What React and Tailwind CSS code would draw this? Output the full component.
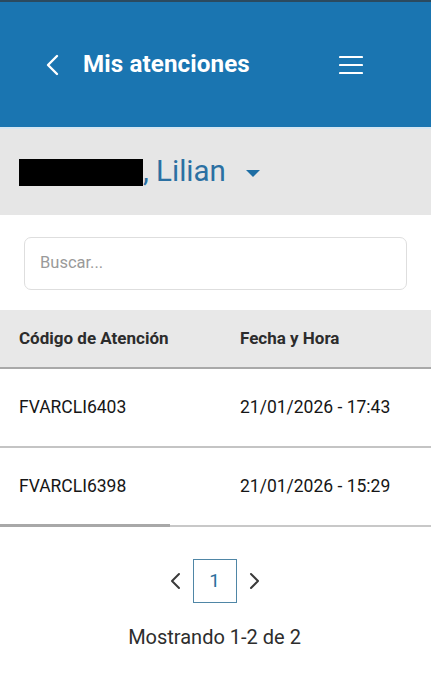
import React from "react";

const rows = [
  { code: "FVARCLI6403", date: "21/01/2026 - 17:43" },
  { code: "FVARCLI6398", date: "21/01/2026 - 15:29" },
];

export default function App() {
  return (
    <div className="w-[431px] h-[693px] bg-white overflow-hidden font-['Roboto',sans-serif]">
      {/* Top bar */}
      <div className="h-[2px] bg-[#2b4a5f]" />
      <header className="h-[125px] bg-[#1a75b1] flex items-center px-[44px] text-white">
        <svg width="18" height="22" viewBox="0 0 18 22" className="mr-[21px]">
          <path d="M13 2 L4 11 L13 20" fill="none" stroke="white" strokeWidth="2.4" strokeLinecap="round" strokeLinejoin="round" />
        </svg>
        <h1 className="text-[24.2px] font-bold tracking-[0.1px] flex-1">Mis atenciones</h1>
        <svg width="24" height="20" viewBox="0 0 24 20" className="mr-[24px]">
          <path d="M1 2 H23 M1 10 H23 M1 18 H23" stroke="white" strokeWidth="2.2" strokeLinecap="round" />
        </svg>
      </header>
      <div className="h-[2px] bg-[#d5e6f2]" />

      {/* Patient selector */}
      <div className="h-[86px] bg-[#e6e6e6] flex items-center px-[19px]">
        <div className="w-[124px] h-[27px] bg-black" />
        <span className="text-[29.5px] text-[#2b70a2] leading-none">, Lilian</span>
        <svg width="16" height="9" viewBox="0 0 16 9" className="ml-[19px] mt-[2px]">
          <path d="M1 1 H15 L8 8 Z" fill="#1e6ea4" />
        </svg>
      </div>

      {/* Search */}
      <div className="px-[24px] pt-[22px] pb-[20px]">
        <div className="h-[53px] border border-[#dedede] rounded-[7px] flex items-center px-[15px]">
          <span className="text-[16.5px] text-[#9a9a9a]">Buscar...</span>
        </div>
      </div>

      {/* Table */}
      <div className="h-[57px] bg-[#e8e8e8] flex items-center px-[19px] text-[17px] font-bold text-[#2c2c2c]">
        <div className="w-[221px]">Código de Atención</div>
        <div>Fecha y Hora</div>
      </div>
      <div className="h-[2px] bg-[#a9a9a9]" />
      {rows.map((r, i) => (
        <div key={r.code}>
          <div className="h-[77px] flex items-center px-[19px] text-[17.5px] text-[#161616]">
            <div className="w-[221px]">{r.code}</div>
            <div>{r.date}</div>
          </div>
          {i === 0 ? (
            <div className="h-[2px] bg-[#c4c4c4]" />
          ) : (
            <div className="relative h-[2px] bg-[#c8c8c8]">
              <div className="absolute left-0 -top-[1px] w-[170px] h-[3px] bg-[#a8a8a8]" />
            </div>
          )}
        </div>
      ))}

      {/* Pagination */}
      <div className="flex items-center justify-center pt-[32px] gap-[10px] pr-[2px]">
        <svg width="14" height="18" viewBox="0 0 14 18">
          <path d="M10 2 L3 9 L10 16" fill="none" stroke="#3a3a3a" strokeWidth="2" strokeLinecap="round" strokeLinejoin="round" />
        </svg>
        <div className="w-[44px] h-[44px] border border-[#4f86a6] flex items-center justify-center text-[19px] text-[#2b6f9c]">
          1
        </div>
        <svg width="14" height="18" viewBox="0 0 14 18">
          <path d="M4 2 L11 9 L4 16" fill="none" stroke="#3a3a3a" strokeWidth="2" strokeLinecap="round" strokeLinejoin="round" />
        </svg>
      </div>
      <p className="text-center text-[20px] text-[#2d2d2d] mt-[19px] pr-[2px]">Mostrando 1-2 de 2</p>
    </div>
  );
}
